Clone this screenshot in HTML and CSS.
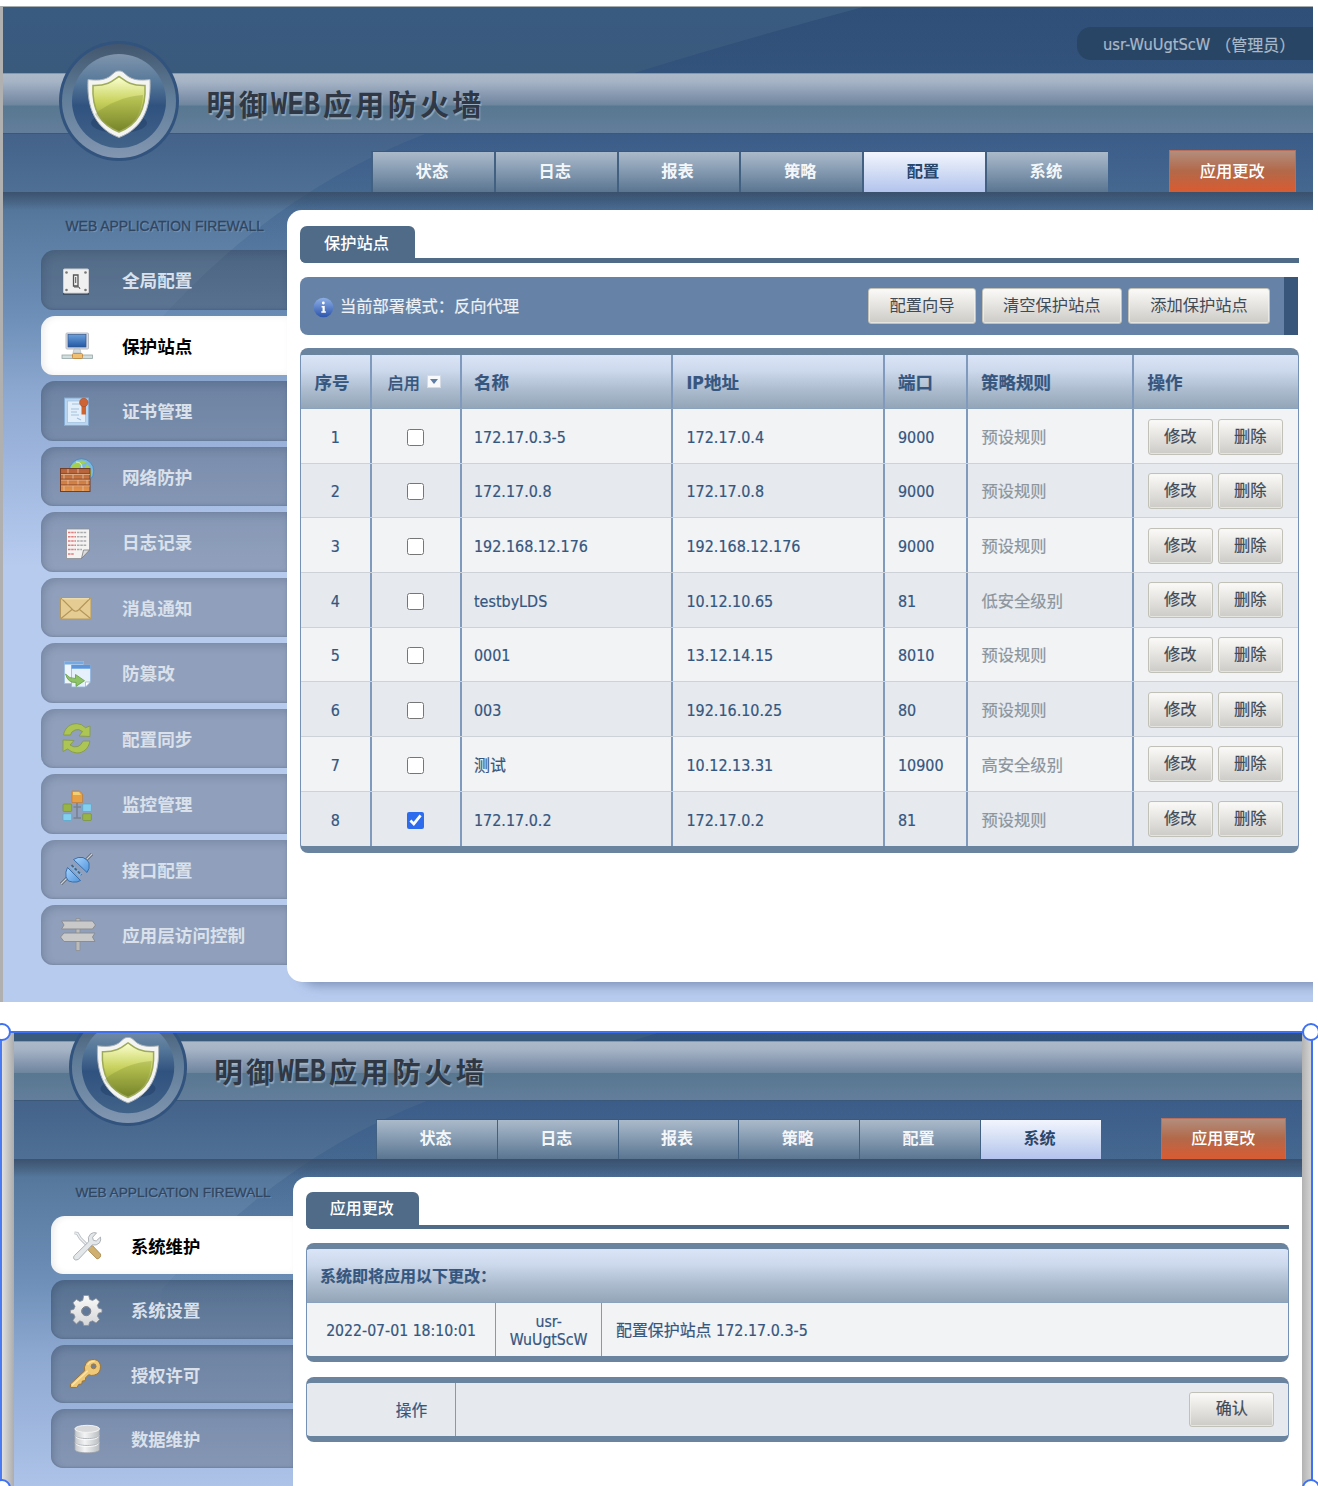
FILE: index.html
```html
<!DOCTYPE html>
<html lang="zh-CN">
<head>
<meta charset="utf-8">
<title>明御WEB应用防火墙</title>
<link rel="stylesheet" href="styles.css">
</head>
<body>
<svg class="defs" width="0" height="0" aria-hidden="true">
  <defs>
    <linearGradient id="ring" x1="0" y1="0" x2="0" y2="1"><stop offset="0" stop-color="#42566e"/><stop offset=".45" stop-color="#5f7c98"/><stop offset="1" stop-color="#8296b1"/></linearGradient>
    <linearGradient id="disc" x1="0" y1="0" x2="0" y2="1"><stop offset="0" stop-color="#8095ad"/><stop offset=".3" stop-color="#56789a"/><stop offset=".55" stop-color="#30527f"/><stop offset="1" stop-color="#416389"/></linearGradient>
    <linearGradient id="lime" x1="0" y1="0" x2="0" y2="1"><stop offset="0" stop-color="#fbffd0"/><stop offset=".45" stop-color="#c8d25d"/><stop offset="1" stop-color="#77852c"/></linearGradient>
    <linearGradient id="wedge" x1="0" y1="0" x2="0" y2="1"><stop offset="0" stop-color="#254170" stop-opacity=".48"/><stop offset=".45" stop-color="#315889" stop-opacity=".42"/><stop offset="1" stop-color="#315889" stop-opacity="0"/></linearGradient>
    <linearGradient id="screen" x1="0" y1="0" x2="0" y2="1"><stop offset="0" stop-color="#6ba0dc"/><stop offset="1" stop-color="#2357a3"/></linearGradient>
    <linearGradient id="brick" x1="0" y1="0" x2="0" y2="1"><stop offset="0" stop-color="#b45f3a"/><stop offset="1" stop-color="#e2944d"/></linearGradient>
    <linearGradient id="silver" x1="0" y1="0" x2="0" y2="1"><stop offset="0" stop-color="#fafafa"/><stop offset="1" stop-color="#d5d6d8"/></linearGradient>
    <linearGradient id="drum" x1="0" y1="0" x2="1" y2="0"><stop offset="0" stop-color="#c4c7ca"/><stop offset=".4" stop-color="#f3f4f5"/><stop offset="1" stop-color="#b9bdc1"/></linearGradient>
    <linearGradient id="sky" x1="0" y1="0" x2="1" y2="1"><stop offset="0" stop-color="#a9d4fb"/><stop offset="1" stop-color="#4f94dd"/></linearGradient>
    <linearGradient id="info" x1="0" y1="0" x2="0" y2="1"><stop offset="0" stop-color="#8eb0e6"/><stop offset="1" stop-color="#2c55ac"/></linearGradient>
    <g id="badge">
      <circle cx="60" cy="60" r="60" fill="#31537d"/>
      <circle cx="60" cy="60" r="57" fill="url(#ring)"/>
      <circle cx="60" cy="60" r="47" fill="url(#disc)"/>
      <ellipse cx="60" cy="82" rx="28" ry="10" fill="#24426a" opacity=".6"/>
      <path d="M60 30C56 29.500 54 33.500 50 36C44 39.500 37 39.500 29 38.500C28 60 32 86 60 96.500C88 86 92 60 91 38.500C83 39.500 76 39.500 70 36C66 33.500 64 29.500 60 30Z" fill="#f4f4f2" stroke="#aab2b8" stroke-width="1"/>
      <path d="M60 35.500C56 37.500 51 45 34 44.500C33 63 37 82 60 91C83 82 87 63 86 44.500C69 45 64 37.500 60 35.500Z" fill="url(#lime)" stroke="#9eaa58" stroke-width="1.500"/>
      <path d="M36 73C48 63 66 55 84 54C83 69 77 85 60 89C48 85 40 80 36 73Z" fill="#6f8022" opacity=".26"/>
    </g>
  </defs>
</svg>

<div class="shot">
  <svg class="sweep" viewBox="0 0 1310 340"><path d="M860 0Q720 38 615 71L422 127Q270 185 150 320L150 340H1310V0Z" fill="url(#wedge)"/></svg>
  <header class="head">
    <div class="topbar"><div class="user">usr-WuUgtScW <span>（管理员）</span></div></div>
    <div class="band"><h1 class="brand">明御<b>WEB</b>应用防火墙</h1></div>
    <nav class="nav">
      <a class="tab">状态</a><a class="tab">日志</a><a class="tab">报表</a><a class="tab">策略</a><a class="tab tab-on">配置</a><a class="tab">系统</a>
      <a class="apply">应用更改</a>
    </nav>
    <svg class="logo" viewBox="0 0 120 120"><use href="#badge"/></svg>
  </header>
  <div class="work">
    <aside class="side">
      <div class="side-title">WEB APPLICATION FIREWALL</div>
      <a class="item"><svg class="ico" viewBox="0 0 36 36"><path d="M4 31h26v2H4z" fill="#2c3a4a" opacity=".6"/><rect x="4.500" y="7" width="25" height="24" rx="1" fill="#f1f0f1" stroke="#cfcfd3"/><g fill="#777"><circle cx="7.500" cy="10.500" r="1.300"/><circle cx="26.500" cy="10.500" r="1.300"/><circle cx="7.500" cy="28" r="1.300"/><circle cx="26.500" cy="28" r="1.300"/></g><path d="M14.500 13h4.500v11h-4.500z" fill="#eee" stroke="#555" stroke-width="1.300"/><path d="M16.700 15v6M15 25h5l1 2" stroke="#555" fill="none"/></svg>全局配置</a>
      <a class="item item-on"><svg class="ico" viewBox="0 0 36 36"><rect x="7" y="6" width="22.500" height="16" rx="1" fill="#d8dbe0" stroke="#b8bcc4"/><rect x="9" y="7.500" width="18" height="12.500" fill="url(#screen)" stroke="#31588f" stroke-width=".7"/><path d="M15 22h6l1 4h-8z" fill="#d5dadd" stroke="#aab4b6" stroke-width=".6"/><rect x="3" y="28" width="30.500" height="3.500" fill="#d2dedd" stroke="#93a5a5" stroke-width=".8"/><rect x="13.500" y="26.500" width="10" height="5" rx="1" fill="#efbf72" stroke="#bc8238" stroke-width=".8"/></svg>保护站点</a>
      <a class="item"><svg class="ico" viewBox="0 0 36 36"><rect x="5.500" y="5" width="24" height="27.500" fill="#b9d4ef" stroke="#86abd2"/><rect x="8.500" y="8" width="18" height="21.500" fill="#e2effb" stroke="#9ebfe0" stroke-width=".7"/><path d="M13 11h9M12 16h8M12 19h6M12 22h8M18 25l4 2" stroke="#a3bfdc" stroke-width="1.200"/><path d="M22.500 12h4.500v9.500h-4.500z" fill="#ce6531"/><circle cx="24.800" cy="9.500" r="4.200" fill="#cc6436" stroke="#a84a26" stroke-width=".6"/></svg>证书管理</a>
      <a class="item"><svg class="ico" viewBox="0 0 36 36"><circle cx="22.500" cy="13" r="12.300" fill="#79b8e5" stroke="#4987b7" stroke-width=".8"/><path d="M14 6q7-6 14-2l-6 3-3 5h-7q-1-3 2-6zM28 6q5 5 4 12l-4-3-3-4z" fill="#a3d14c"/><path d="M17 4q6 0 6 6" stroke="#dff5d5" fill="none"/><rect x="1.500" y="10.500" width="29.500" height="23" fill="url(#brick)" stroke="#713f29"/><path d="M2 16.300h29M2 22h29M2 27.800h29M9 11v5M19 11v5M5 16.500v5M14 16.500v5M24 16.500v5M9 22v6M19 22v6M5 28v5M14 28v5M24 28v5M28 22v5" stroke="#e6bd9c" stroke-width=".9"/><path d="M2 15.400h29M2 21.100h29M2 26.900h29" stroke="#7b3e23" stroke-width=".8"/></svg>网络防护</a>
      <a class="item"><svg class="ico" viewBox="0 0 36 36"><path d="M7.500 5h23v21l-8 8.500h-15z" fill="#f4f3f2" stroke="#8d8f93" stroke-width=".8"/><path d="M9 8.500h8M9 12.700h8M9 17h8M9 21.300h8M9 25.600h8M9 30h6" stroke="#e27b7b" stroke-width="1.500" stroke-dasharray="2.500 .7"/><path d="M18 8.500h10M18 12.700h10M18 17h10M18 21.300h10M18 25.600h5" stroke="#a9abad" stroke-width="1.500" stroke-dasharray="2.500 .8"/><path d="M30.500 26h-6l-2 8.500z" fill="#dcdcdc" stroke="#77797c" stroke-width=".8"/></svg>日志记录</a>
      <a class="item"><svg class="ico" viewBox="0 0 36 36"><rect x="1.500" y="8.500" width="30.500" height="21.500" rx="1" fill="#e5cc93" stroke="#b69a5d"/><path d="M2 9l12 12q2.700 2.500 5.500 0L31.500 9M2 29.500l11-9M31.500 29.500l-11-9" stroke="#b39658" fill="none" stroke-width="1.100"/><path d="M3 9.800h27" stroke="#f1e2b5"/></svg>消息通知</a>
      <a class="item"><svg class="ico" viewBox="0 0 36 36"><rect x="5.500" y="6.500" width="19" height="22" fill="#eef5fd" stroke="#9bbbe0" stroke-width=".8"/><path d="M5.500 6.500h19v3h-19z" fill="#75a9e1"/><path d="M12.500 10h19v17l-5 5h-14z" fill="#e5f0fc" stroke="#91b4df" stroke-width=".8"/><path d="M12.500 10h19v3.700h-19z" fill="#5b96dc"/><path d="M26.500 32v-5h5z" fill="#fff" stroke="#8b9fb8" stroke-width=".6"/><path d="M6.500 19q4 5 10 4.500v-4l9 6.200-8.500 5.700v-4q-8 1-10.500-8.400z" fill="#8ec466" stroke="#659c46" stroke-width=".8"/></svg>防篡改</a>
      <a class="item"><svg class="ico" viewBox="0 0 36 36"><path d="M4.500 15C6 7 12 3.500 18 3.700q5 .2 8.500 4L31 6v10.500l-11-.5 3.500-4.500Q20 8.500 16 10q-4 1.500-4.500 5z" fill="#acc554" stroke="#83983f" stroke-width=".8"/><path d="M31 21C29.500 29 24 33 18 33q-5-.2-9.500-4L4 31.500V20l11 .5-4 4.500q4 3 8 1.500 3.500-1.500 5-5.500z" fill="#acc554" stroke="#83983f" stroke-width=".8"/></svg>配置同步</a>
      <a class="item"><svg class="ico" viewBox="0 0 36 36"><path d="M18 17v15M14.500 21h7.500M14.500 32h7.500" stroke="#78818f" stroke-width="1.600"/><path d="M13 5h7.500l3 3v8.500H13z" fill="#e8a045" stroke="#bd752f" stroke-width=".6"/><path d="M14 6h6l2 3h-8z" fill="#f2cf74"/><rect x="4" y="18" width="8.700" height="7.500" rx="1" fill="#98b346" stroke="#748d2f" stroke-width=".6"/><rect x="23.700" y="18" width="8.700" height="7.500" rx="1" fill="#84cff0" stroke="#4ba4c9" stroke-width=".6"/><rect x="4" y="27.700" width="8.700" height="6.800" rx="1" fill="#84cff0" stroke="#4ba4c9" stroke-width=".6"/><rect x="23.700" y="27.700" width="8.700" height="6.800" rx="1" fill="#98b346" stroke="#748d2f" stroke-width=".6"/></svg>监控管理</a>
      <a class="item"><svg class="ico" viewBox="0 0 36 36"><path d="M2 33l7-7M26 10l7-7" stroke="#56616e" stroke-width="3"/><path d="M2 33l7-7M26 10l7-7" stroke="#cfd2d6" stroke-width="1.400"/><path d="M8.500 16.500l13 13q-3 2.200-8 1.500l-4-1-2.500-4q-1-5 1.500-9.500z" fill="url(#sky)" stroke="#3a6faa"/><path d="M14.500 8.500L28 21.500q3-3.500 2-9.500l-2-3-4-2.500q-5-1-9.500 2z" fill="url(#sky)" stroke="#3a6faa"/><path d="M12 14.500l10 10" stroke="#7fb4e8" stroke-width="4"/><path d="M12.500 14l10 10" stroke="#59636f" stroke-width="2" stroke-dasharray="3 1.500"/></svg>接口配置</a>
      <a class="item"><svg class="ico ico-wide" viewBox="0 0 38 36"><path d="M17 1.500h4v32h-4z" fill="#bbb" stroke="#8d8f92" stroke-width=".8"/><path d="M2.500 4h31l3 4-3 4h-31l2.500-4z" fill="#c9c9c9" stroke="#8b8d90"/><path d="M36 16H5l-3.500 4L5 24.500h31L33.500 20z" fill="#c9c9c9" stroke="#8b8d90"/></svg>应用层访问控制</a>
    </aside>
    <main class="panel">
      <div class="section"><span class="section-tab">保护站点</span></div>
      <div class="notice">
        <svg class="notice-ico" viewBox="0 0 22 22"><circle cx="11" cy="11" r="10.300" fill="url(#info)"/><circle cx="10.800" cy="6.300" r="1.500" fill="#fff"/><path d="M9 9.500h3.300v5.500h1.200v1.500H8.700V15H10v-4H9z" fill="#fff"/></svg>
        <span class="notice-text">当前部署模式：反向代理</span>
        <a class="btn b1">配置向导</a><a class="btn b2">清空保护站点</a><a class="btn b3">添加保护站点</a>
      </div>
      <div class="table sites">
        <div class="row row-head"><div class="c">序号</div><div class="c toggle">启用<i class="drop"></i></div><div>名称</div><div>IP地址</div><div>端口</div><div>策略规则</div><div>操作</div></div>
        <div class="row"><div class="n">1</div><div class="k"><input type="checkbox"></div><div>172.17.0.3-5</div><div>172.17.0.4</div><div>9000</div><div class="rule">预设规则</div><div class="ops"><a class="btn">修改</a><a class="btn">删除</a></div></div>
        <div class="row"><div class="n">2</div><div class="k"><input type="checkbox"></div><div>172.17.0.8</div><div>172.17.0.8</div><div>9000</div><div class="rule">预设规则</div><div class="ops"><a class="btn">修改</a><a class="btn">删除</a></div></div>
        <div class="row"><div class="n">3</div><div class="k"><input type="checkbox"></div><div>192.168.12.176</div><div>192.168.12.176</div><div>9000</div><div class="rule">预设规则</div><div class="ops"><a class="btn">修改</a><a class="btn">删除</a></div></div>
        <div class="row"><div class="n">4</div><div class="k"><input type="checkbox"></div><div>testbyLDS</div><div>10.12.10.65</div><div>81</div><div class="rule">低安全级别</div><div class="ops"><a class="btn">修改</a><a class="btn">删除</a></div></div>
        <div class="row"><div class="n">5</div><div class="k"><input type="checkbox"></div><div>0001</div><div>13.12.14.15</div><div>8010</div><div class="rule">预设规则</div><div class="ops"><a class="btn">修改</a><a class="btn">删除</a></div></div>
        <div class="row"><div class="n">6</div><div class="k"><input type="checkbox"></div><div>003</div><div>192.16.10.25</div><div>80</div><div class="rule">预设规则</div><div class="ops"><a class="btn">修改</a><a class="btn">删除</a></div></div>
        <div class="row"><div class="n">7</div><div class="k"><input type="checkbox"></div><div class="cn">测试</div><div>10.12.13.31</div><div>10900</div><div class="rule">高安全级别</div><div class="ops"><a class="btn">修改</a><a class="btn">删除</a></div></div>
        <div class="row"><div class="n">8</div><div class="k"><input type="checkbox" checked></div><div>172.17.0.2</div><div>172.17.0.2</div><div>81</div><div class="rule">预设规则</div><div class="ops"><a class="btn">修改</a><a class="btn">删除</a></div></div>
      </div>
    </main>
  </div>
</div>

<div class="frame">
  <div class="crop">
    <div class="shot shot-small">
      <svg class="sweep" viewBox="0 0 1310 340"><path d="M860 0Q720 38 615 71L422 127Q270 185 150 320L150 340H1310V0Z" fill="url(#wedge)"/></svg>
      <header class="head">
        <div class="topbar"></div>
        <div class="band"><h1 class="brand">明御<b>WEB</b>应用防火墙</h1></div>
        <nav class="nav">
          <a class="tab">状态</a><a class="tab">日志</a><a class="tab">报表</a><a class="tab">策略</a><a class="tab">配置</a><a class="tab tab-on">系统</a>
          <a class="apply">应用更改</a>
        </nav>
        <svg class="logo" viewBox="0 0 120 120"><use href="#badge"/></svg>
      </header>
      <div class="work">
        <aside class="side">
          <div class="side-title">WEB APPLICATION FIREWALL</div>
          <a class="item item-on"><svg class="ico" viewBox="0 0 36 36"><path d="M20 20l4-1 8 8.500q1 4-3.500 5L20 24z" fill="#d0b06e" stroke="#9f8044" stroke-width=".8"/><path d="M5.500 6l3 .5 3 5L21 21" stroke="#b9bfc4" stroke-width="3" fill="none"/><path d="M5.500 6l3 .5 3 5L21 21" stroke="#eef0f1" stroke-width="1.300" fill="none"/><path d="M5.500 29L20 15q-1.500-5 2-8 3-2 6-1l-4 4.500.7 3 3 .7 4.300-4q1 3-1 6-3 3-7.500 2L9.500 33q-3 1.500-4.500-.5-1-2 .5-3.500z" fill="#e4e7e9" stroke="#a5abb0" stroke-width=".9"/></svg>系统维护</a>
          <a class="item"><svg class="ico" viewBox="0 0 36 36"><path fill-rule="evenodd" d="M15 3.500h5l1 4 3 1.200 3.500-2.200 3.500 3.500-2.200 3.500 1.200 3 3.500 1v3l-3.500 1-1.200 3 2.200 3.500-3.500 3.500-3.500-2.200-3 1.200-1 3.500h-5l-1-3.500-3-1.200L7.500 32.500 4 29l2.200-3.500-1.200-3-3.500-1v-3l3.500-1 1.200-3L4 11l3.500-3.500L11 9.700l3-1.200zM17.500 15a4.500 4.500 0 1 0 .1 0z" fill="url(#silver)" stroke="#8c9198" stroke-width=".8"/><circle cx="17.500" cy="19.500" r="4.600" fill="none" stroke="#7a828c"/></svg>系统设置</a>
          <a class="item"><svg class="ico" viewBox="0 0 36 36"><path d="M17 8q3-5 9-4.500 6 1.500 6 7.500 0 7-6.500 8.500-3 .8-5.500-.5l-3 3-.5 3-3 .5-.5 3-3 .3L8 32H1.500v-3.500L16 15q-1-4 1-7z" fill="#efc978" stroke="#9c7436"/><path d="M3 30l16-15M19 9q2-4 7-3.500" stroke="#f9e6ae" stroke-width="1.300" fill="none"/><circle cx="25" cy="10.500" r="2.500" fill="#748097" stroke="#a27b3c"/></svg>授权许可</a>
          <a class="item"><svg class="ico" viewBox="0 0 36 36"><path d="M6 8v21c0 4.500 25 4.500 25 0V8z" fill="url(#drum)" stroke="#9da2a8" stroke-width=".8"/><path d="M6 14.500c0 4.500 25 4.500 25 0M6 21.500c0 4.500 25 4.500 25 0" fill="none" stroke="#b3b7bb"/><path d="M7 16c1 4 22 4 23 0M7 23c1 4 22 4 23 0" fill="none" stroke="#fff" stroke-width=".8"/><ellipse cx="18.500" cy="8" rx="12.500" ry="3.600" fill="#d7d9db" stroke="#f3f3f3"/></svg>数据维护</a>
        </aside>
        <main class="panel">
          <div class="section"><span class="section-tab">应用更改</span></div>
          <div class="table changes">
            <div class="caption">系统即将应用以下更改：</div>
            <div class="row"><div class="n">2022-07-01 18:10:01</div><div class="n who">usr-<br>WuUgtScW</div><div>配置保护站点 172.17.0.3-5</div></div>
          </div>
          <div class="table confirm">
            <div class="row"><div class="label">操作</div><div class="end"><a class="btn">确认</a></div></div>
          </div>
        </main>
      </div>
    </div>
  </div>
  <i class="grip tl"></i><i class="grip tr"></i><i class="grip bl"></i><i class="grip br"></i>
</div>
</body>
</html>
```

FILE: styles.css
```css
* { box-sizing: border-box; }
html, body { margin: 0; background: #fff; }
body {
  width: 1318px; height: 1486px; overflow: hidden; padding-top: 6px;
  font-family: "DejaVu Sans Condensed", "DejaVu Sans", "Noto Sans CJK SC", sans-serif;
  font-stretch: condensed; font-size: 16.300px; color: #35567f;
}
.defs { position: absolute; }

/* application window */
.shot {
  position: relative; width: 1313px; height: 996px; overflow: hidden;
  border-left: 3px solid #b0b0b0; border-top: 1px solid #a5adb0;
  background: linear-gradient(#395b80 0, #3a5a7c 67px, #44628a 127px, #4f7094 186px, #587a9f 215px, #6d8fb8 310px, #8da8d0 385px, #9db5dc 450px, #b7cbef 560px);
}
.sweep { position: absolute; left: 0; top: 0; width: 1310px; height: 340px; }
.head { position: relative; height: 185px; display: flex; flex-direction: column; }
.topbar { height: 66px; display: flex; justify-content: flex-end; align-items: flex-start; padding-top: 20px; }
.user {
  width: 236px; height: 33px; padding-left: 26px; border-radius: 14px 0 0 14px;
  background: #294565; color: #a9b9c9; line-height: 35px; white-space: nowrap; display: flex;
  -webkit-text-stroke: .2px;
}
.user span { margin-left: 5px; font: 16px/34px "Noto Sans CJK SC", sans-serif; }
.band {
  height: 61px; border-top: 1px solid #8798ac; border-bottom: 1px solid #3b5879;
  background: linear-gradient(#acb9c9 0, #a5b3c5 8px, #8496ae 22px, #6f869f 31px, #587790 32px, #637e9c 60px);
  padding-left: 203.500px;
}
.brand {
  margin: 0; display: flex; align-items: center; height: 58px; white-space: nowrap;
  font: 700 29px/58px "Noto Sans CJK SC", sans-serif; letter-spacing: 3.300px;
  color: #2f3844; text-shadow: 1px 2px 1px rgba(190,205,220,.55);
}
.brand b { font: 700 27.200px/62px "Liberation Mono", monospace; letter-spacing: 0; transform: scaleY(1.220); margin-right: 3px; padding-top: 4px; }
.nav { flex: 1; display: flex; align-items: flex-end; padding-left: 368px; }
.tab {
  width: 122.800px; height: 41px; border-left: 2px solid #426082; border-top: 1px solid #3c597b;
  background: linear-gradient(#abbaca, #8fa3b8 35%, #5a7591);
  color: #f4f7fa; font-weight: 700; text-align: center; line-height: 39px; padding-right: 3px;
}
.tab-on { background: linear-gradient(#f2f5fd, #d5dff5 45%, #b3c3ed); color: #29466b; }
.apply {
  width: 127px; height: 42px; margin-left: 61px; border: 1px solid #b56f5c; border-bottom: 0;
  background: linear-gradient(#b28e7d, #b2694a 48%, #d95b31); color: #fff; font-weight: 500;
  text-align: center; line-height: 41px;
}
.logo { position: absolute; left: 56px; top: 33.500px; width: 120px; height: 120px; }
.work { position: relative; display: flex; height: 810px; }
.work::before {
  content: ""; position: absolute; left: 0; right: 0; top: 0; height: 18px;
  background: linear-gradient(rgba(55,75,100,.8), rgba(60,85,115,0));
}

/* side menu */
.side { position: relative; width: 283.500px; padding: 24px 0 0 38px; flex: none; }
.side-title {
  height: 34px; padding-left: 24.500px; font: 13.900px/20px "Liberation Sans", Arial, sans-serif;
  color: #30455f; text-shadow: 1px 1px 1px rgba(160,185,215,.5); white-space: nowrap;
  -webkit-text-stroke: .3px;
}
.item {
  display: flex; align-items: center; height: 59.500px; margin-bottom: 6.020px; padding-left: 18px;
  border-radius: 14px 0 0 12px; background: rgba(0,0,0,.21);
  box-shadow: inset 3px 3px 8px rgba(30,50,80,.2), inset 0 -1px 2px rgba(30,50,80,.15);
  color: #dae1eb; font-weight: 700; font-size: 17.600px; white-space: nowrap;
}
.item:nth-of-type(1) { background-color: rgba(50,50,50,.27); }
.item.item-on { background: #fff; color: #000; box-shadow: inset 3px 0 7px rgba(0,0,0,.07); }
.ico { width: 36px; height: 36px; margin-right: 27px; flex: none; }
.ico-wide { width: 38px; margin-right: 25px; }

/* content */
.panel {
  position: relative; flex: 1; min-width: 0; height: 772px; margin-top: 18px; padding: 16px 14px 0 13.500px;
  background: #fff; border-radius: 15px 0 0 15px; box-shadow: 14px 3px 12px rgba(80,100,140,.6);
}
.section { height: 37px; margin-bottom: 14px; border-bottom: 5px solid #4f6b88; border-bottom-left-radius: 6px; }
.section-tab {
  display: block; width: 115px; height: 37px; border-radius: 7px 6px 0 6px; background: #4f6b88;
  color: #fff; font-weight: 500; line-height: 35px; text-align: center; padding-right: 2px;
}
.notice {
  display: flex; align-items: flex-start; height: 57.500px; width: 998px; margin-bottom: 13.500px; padding: 11px 14px 0 13px;
  background: #6682a6; border-right: 14px solid #37567a; border-radius: 8px 0 0 8px;
}
.notice-ico { width: 21px; height: 21px; margin-top: 9px; }
.notice-text { flex: 1; padding-left: 6px; line-height: 37px; color: #eef2f7; -webkit-text-stroke: .2px; }
.btn {
  display: block; width: 65.500px; height: 36px; border: 1px solid #c2c1b8; border-radius: 3px;
  background: linear-gradient(#fbfaf8, #eceae7 35%, #cdcbc6);
  box-shadow: inset 0 0 0 1px rgba(245,245,240,.6);
  font-size: 16.300px; color: #3e4a58; text-align: center; line-height: 33px; white-space: nowrap;
}
.b1 { width: 108px; }
.b2 { width: 140.500px; margin-left: 5.500px; }
.b3 { width: 142px; margin-left: 6px; }

.table {
  width: 999px; border: 1.500px solid #7591b5; border-top: 7px solid #6a849f; border-bottom: 7px solid #6a849f;
  border-radius: 8px; overflow: hidden; font-size: 15.950px; -webkit-text-stroke: .2px;
}
.row { display: grid; height: 54.660px; background: #f1f3f5; border-bottom: 1px solid #cdd2d8; }
.row:last-child { border-bottom: 0; }
.sites .row { grid-template-columns: 68.500px 90px 211.500px 211.500px 83px 166.500px 1fr; }
.row:nth-child(odd) { background: #e6eaee; }
.row > div { display: flex; align-items: center; padding: 2.500px 0 0 13.500px; border-left: 2px solid #7f9abc; white-space: nowrap; }
.row > div:nth-child(3) { padding-left: 12.500px; }
.row > div:first-child { border-left: 0; }
.sites .row-head, .caption {
  height: 54px; background: linear-gradient(#dbe5f8 0, #ccd8ec 30%, #adbdcf 65%, #93a5b8);
  border-bottom: 1px solid #8ba2bd; font-weight: 700;
}
.row-head { font-size: 17.500px; }
.row-head > div, .row > .rule, .row > .cn, .row > .label { padding-top: 0; }
.row > .n, .row > .k { justify-content: center; padding-left: 0; }
.row > .k input { width: 17px; height: 17px; margin: 0; accent-color: #2c6ced; }
.row > .toggle { font-size: 16.200px; font-weight: 500; padding-left: 16px; }
.drop { width: 14px; height: 13px; margin-left: 7px; background: #f8f9fb; border: 1px solid #d5dbe4; display: grid; place-items: center; }
.drop::after { content: ""; border: 4px solid transparent; border-top: 5px solid #5d7da5; border-bottom: 0; }
.row > .rule { color: #8c949c; font-size: 16.300px; padding-left: 14px; }
.row > .ops { align-items: flex-start; gap: 4.500px; padding-top: 9.500px; }

/* framed second window */
.frame {
  position: relative; margin-top: 29px; width: 1313px; height: 470px;
  border: 2px solid #3f72f2; border-left-color: #4a7bf3; padding: 0 10px 0 12px;
  background: linear-gradient(90deg, #dfdfdf 0, #acacac 12px, #acacac 1298px, #d9d9d9 1311px);
}
.crop { width: 1288px; height: 466px; overflow: hidden; }
.shot-small { zoom: .9837; margin-top: -59px; width: 1310px; border: 0; }
.shot-small .head { height: 187px; padding-top: 1px; }
.caption { height: 55px; line-height: 56px; padding-left: 13px; font-size: 16.300px; }
.changes { margin-bottom: 14.500px; }
.changes .row { grid-template-columns: 191px 108px 1fr; background: #f1f3f5; }
.changes .row > div:last-child { padding-left: 14px; padding-top: 1px; font-size: 16.200px; }
.changes .who { line-height: 18.500px; text-align: center; }
.confirm .row { grid-template-columns: 150px 1fr; }
.row > .label { justify-content: flex-end; padding-right: 28px; }
.row > .end { justify-content: flex-end; padding: 0 14px 0 0; }
.end .btn { width: 86px; }
.grip { position: absolute; width: 18px; height: 18px; border: 2px solid #3f72f2; border-radius: 50%; background: #fff; }
.tl { left: -9px; top: -10px; }
.tr { left: 1300px; top: -10px; }
.bl { left: -9px; top: 446px; }
.br { left: 1300px; top: 446px; }
```
